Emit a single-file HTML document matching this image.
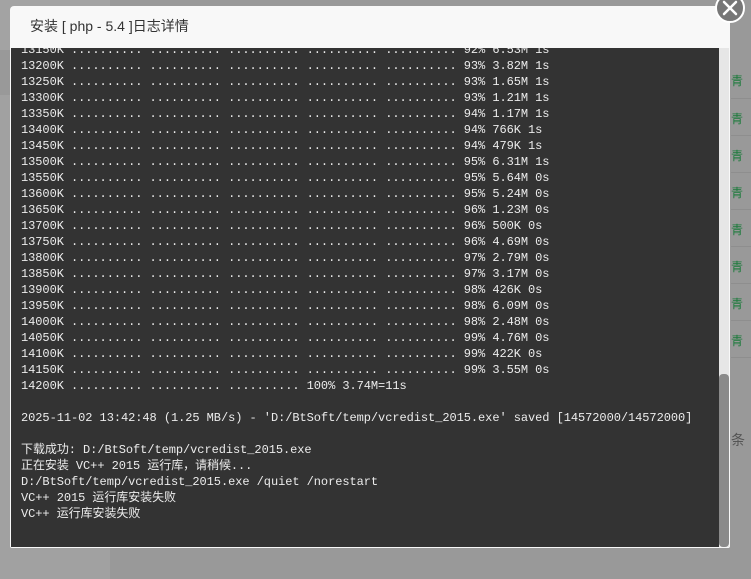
<!DOCTYPE html>
<html><head><meta charset="utf-8"><style>
*{margin:0;padding:0;box-sizing:border-box}
body{width:751px;height:579px;background:#999;position:relative;overflow:hidden;font-family:"Liberation Sans","Noto Sans CJK SC",sans-serif}
.leftcol{position:absolute;left:0;top:95px;width:110px;height:484px;background:#a1a1a1}
.lt1{position:absolute;left:0;top:0;width:110px;height:50px;background:#a3a3a3}
.rt{position:absolute;left:731px;font-size:12px;color:#1a7a3a}
.rl{position:absolute;left:731px;width:20px;height:1px;background:#8e8e8e}
.dlg{position:absolute;left:10px;top:6px;width:720px;height:542px;background:#f8f8f8;border-radius:4px 4px 2px 2px;overflow:hidden}
.title{height:42px;line-height:40px;padding-left:20px;font-size:14px;color:#333}
.con{position:absolute;left:1px;top:42px;width:708px;height:499px;background:#333;overflow:hidden}
pre{position:absolute;left:10px;top:-6px;font-family:"Liberation Mono","Noto Sans CJK SC",monospace;font-size:12px;line-height:16px;color:#ececec;letter-spacing:-0.06px}
.track{position:absolute;left:709px;top:42px;width:10px;height:499px;background:#e6e6e6}
.thumb{position:absolute;left:709px;top:368px;width:10px;height:173px;background:#8a8a8a;border-radius:4px}
.close{position:absolute;left:715px;top:-7px;width:30px;height:30px;border-radius:50%;background:#777;border:2px solid #fff}
</style></head><body>
<div class="lt1"></div>
<div class="leftcol"></div>
<div class="rt" style="top:72px">青</div><div class="rl" style="top:98px"></div>
<div class="rt" style="top:110px">青</div><div class="rl" style="top:135px"></div>
<div class="rt" style="top:147px">青</div><div class="rl" style="top:172px"></div>
<div class="rt" style="top:184px">青</div><div class="rl" style="top:209px"></div>
<div class="rt" style="top:221px">青</div><div class="rl" style="top:246px"></div>
<div class="rt" style="top:258px">青</div><div class="rl" style="top:283px"></div>
<div class="rt" style="top:295px">青</div><div class="rl" style="top:320px"></div>
<div class="rt" style="top:332px">青</div><div class="rl" style="top:357px"></div>
<div class="rt" style="top:430px;color:#555;font-size:14px">条</div>
<div class="dlg">
<div class="title">安装 [ php - 5.4 ]日志详情</div>
<div class="con"><pre>13150K .......... .......... .......... .......... .......... 92% 6.53M 1s
13200K .......... .......... .......... .......... .......... 93% 3.82M 1s
13250K .......... .......... .......... .......... .......... 93% 1.65M 1s
13300K .......... .......... .......... .......... .......... 93% 1.21M 1s
13350K .......... .......... .......... .......... .......... 94% 1.17M 1s
13400K .......... .......... .......... .......... .......... 94% 766K 1s
13450K .......... .......... .......... .......... .......... 94% 479K 1s
13500K .......... .......... .......... .......... .......... 95% 6.31M 1s
13550K .......... .......... .......... .......... .......... 95% 5.64M 0s
13600K .......... .......... .......... .......... .......... 95% 5.24M 0s
13650K .......... .......... .......... .......... .......... 96% 1.23M 0s
13700K .......... .......... .......... .......... .......... 96% 500K 0s
13750K .......... .......... .......... .......... .......... 96% 4.69M 0s
13800K .......... .......... .......... .......... .......... 97% 2.79M 0s
13850K .......... .......... .......... .......... .......... 97% 3.17M 0s
13900K .......... .......... .......... .......... .......... 98% 426K 0s
13950K .......... .......... .......... .......... .......... 98% 6.09M 0s
14000K .......... .......... .......... .......... .......... 98% 2.48M 0s
14050K .......... .......... .......... .......... .......... 99% 4.76M 0s
14100K .......... .......... .......... .......... .......... 99% 422K 0s
14150K .......... .......... .......... .......... .......... 99% 3.55M 0s
14200K .......... .......... .......... 100% 3.74M=11s

2025-11-02 13:42:48 (1.25 MB/s) - 'D:/BtSoft/temp/vcredist_2015.exe' saved [14572000/14572000]

下载成功: D:/BtSoft/temp/vcredist_2015.exe
正在安装 VC++ 2015 运行库，请稍候...
D:/BtSoft/temp/vcredist_2015.exe /quiet /norestart
VC++ 2015 运行库安装失败
VC++ 运行库安装失败</pre></div>
<div class="track"></div>
<div class="thumb"></div>
</div>
<div class="close"><svg width="26" height="26" viewBox="0 0 26 26" style="position:absolute;left:0;top:0"><path d="M7 7L19 19M19 7L7 19" stroke="#fff" stroke-width="2.5" stroke-linecap="round"/></svg></div>
</body></html>
